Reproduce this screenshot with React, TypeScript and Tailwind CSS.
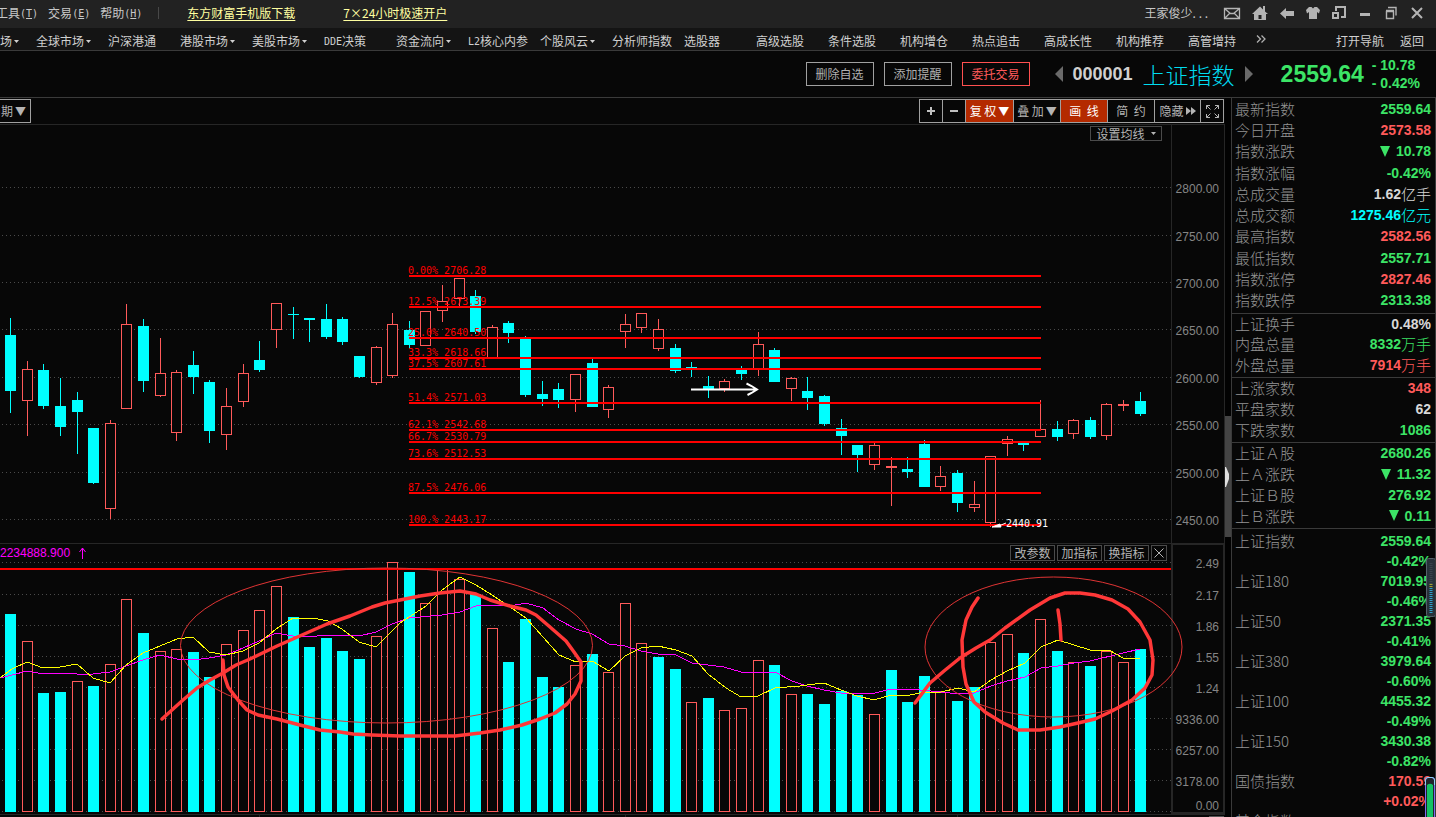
import React from 'react';

type Candle = { high: number; top: number; bottom: number; low: number; up: boolean; vol: number; volUp: boolean };

const RAW: [number, number, number, number, string, number, string][] = [
  [318, 335, 391, 413, 'c', 614, 'c'], [361, 369, 401, 436, 'r', 641, 'r'], [364, 370, 406, 409, 'c', 693, 'c'],
  [378, 406, 427, 436, 'c', 692, 'c'], [392, 400, 412, 454, 'c', 681, 'r'], [428, 428, 483, 484, 'c', 686, 'c'],
  [420, 423, 509, 519, 'r', 664, 'r'], [304, 324, 409, 409, 'r', 599, 'r'], [319, 326, 381, 392, 'c', 633, 'c'],
  [338, 373, 396, 397, 'r', 651, 'r'], [370, 372, 433, 441, 'r', 649, 'r'], [351, 365, 377, 394, 'c', 652, 'c'],
  [380, 382, 431, 443, 'c', 677, 'c'], [388, 406, 435, 450, 'r', 644, 'r'], [364, 373, 402, 407, 'r', 630, 'r'],
  [341, 360, 370, 372, 'c', 610, 'r'], [303, 303, 330, 348, 'r', 586, 'r'], [307, 314, 315, 339, 'c', 617, 'c'],
  [318, 318, 320, 342, 'c', 647, 'c'], [304, 319, 337, 339, 'c', 638, 'c'], [317, 319, 342, 345, 'c', 651, 'c'],
  [356, 356, 377, 378, 'c', 659, 'c'], [346, 347, 383, 385, 'r', 636, 'r'], [313, 324, 376, 378, 'r', 562, 'r'],
  [321, 330, 345, 349, 'c', 572, 'c'], [311, 311, 346, 346, 'r', 603, 'r'], [285, 301, 311, 322, 'r', 569, 'r'],
  [278, 278, 299, 306, 'r', 579, 'r'], [290, 296, 332, 334, 'c', 594, 'c'], [325, 327, 358, 358, 'r', 628, 'r'],
  [321, 323, 333, 343, 'c', 662, 'c'], [336, 339, 395, 397, 'c', 619, 'c'], [381, 394, 399, 406, 'c', 677, 'c'],
  [383, 389, 400, 408, 'c', 687, 'c'], [374, 374, 400, 412, 'r', 665, 'r'], [359, 363, 407, 407, 'c', 654, 'c'],
  [385, 387, 410, 418, 'r', 672, 'r'], [314, 324, 332, 348, 'r', 603, 'r'], [313, 313, 328, 333, 'r', 643, 'r'],
  [319, 329, 349, 351, 'r', 657, 'c'], [344, 348, 371, 373, 'c', 669, 'c'], [362, 367, 368, 377, 'c', 702, 'r'],
  [376, 386, 390, 398, 'c', 698, 'c'], [379, 381, 389, 392, 'r', 710, 'r'], [366, 370, 374, 380, 'c', 708, 'r'],
  [332, 344, 369, 376, 'r', 660, 'r'], [348, 350, 382, 382, 'c', 665, 'c'], [377, 378, 389, 401, 'r', 694, 'r'],
  [377, 391, 398, 410, 'c', 694, 'c'], [395, 396, 424, 426, 'c', 704, 'c'], [419, 428, 436, 455, 'c', 691, 'c'],
  [445, 445, 455, 472, 'c', 695, 'c'], [443, 445, 465, 470, 'r', 714, 'r'], [457, 466, 468, 506, 'r', 670, 'c'],
  [457, 469, 472, 478, 'c', 702, 'c'], [440, 444, 487, 487, 'c', 676, 'c'], [466, 476, 487, 491, 'r', 692, 'r'],
  [470, 473, 503, 512, 'c', 701, 'c'], [481, 504, 508, 512, 'r', 687, 'c'], [456, 456, 523, 527, 'r', 642, 'r'],
  [436, 439, 444, 456, 'r', 634, 'r'], [442, 443, 445, 451, 'c', 653, 'c'], [400, 429, 437, 437, 'r', 619, 'r'],
  [421, 429, 437, 441, 'c', 651, 'c'], [419, 420, 434, 439, 'r', 662, 'r'], [417, 420, 437, 439, 'c', 666, 'c'],
  [403, 404, 436, 440, 'r', 651, 'r'], [400, 404, 406, 411, 'r', 662, 'r'], [392, 401, 414, 416, 'c', 649, 'c'],
];

const CANDLES: Candle[] = RAW.map(([high, top, bottom, low, k, vol, v]) => ({
  high, top, bottom, low, up: k === 'r', vol, volUp: v === 'r',
}));

const FIB: [string, number][] = [
  ['0.00% 2706.28', 276], ['12.5% 2673.39', 307], ['25.0% 2640.50', 338], ['33.3% 2618.66', 358],
  ['37.5% 2607.61', 369], ['51.4% 2571.03', 403], ['62.1% 2542.68', 430], ['66.7% 2530.79', 442],
  ['73.6% 2512.53', 459], ['87.5% 2476.06', 493], ['100.% 2443.17', 525],
];

const PRICE_AXIS: [string, number][] = [
  ['2800.00', 188], ['2750.00', 236], ['2700.00', 283], ['2650.00', 330],
  ['2600.00', 378], ['2550.00', 425], ['2500.00', 473], ['2450.00', 520],
];
const VOLUME_AXIS: [string, number][] = [
  ['2.49', 563], ['2.17', 595], ['1.86', 626], ['1.55', 657], ['1.24', 688],
  ['9336.00', 719], ['6257.00', 750], ['3178.00', 781], ['0.00', 805],
];

const MA_SHORT = '0,678 12,669 27,662 43,668 60,667 77,664 93,678 110,683 126,665 143,653 160,646 177,639 193,637 209,652 226,655 243,651 259,643 276,629 293,618 313,618 328,621 342,629 359,642 376,647 392,631 400,623 426,606 442,590 460,577 476,585 492,595 510,607 526,618 543,637 559,655 576,662 592,661 609,671 625,656 641,648 658,646 676,650 692,656 708,674 726,688 741,697 758,696 775,688 800,686 807,685 824,683 841,690 857,696 874,700 891,695 910,695 924,692 941,692 958,688 974,692 991,680 1007,671 1025,663 1041,647 1058,640 1074,645 1090,650 1109,650 1123,658 1140,658';
const MA_LONG = '0,678 12,675 27,671 43,674 60,673 77,674 93,674 110,672 126,666 143,660 160,655 177,659 193,660 209,658 226,655 243,648 259,641 276,633 293,636 309,637 326,635 359,636 376,632 392,624 409,618 442,615 460,612 476,606 492,605 510,606 526,603 543,608 559,620 576,629 592,634 609,644 625,646 641,651 658,654 676,655 692,663 724,667 741,672 775,672 792,681 807,686 824,690 841,693 875,693 891,689 910,689 941,692 958,694 974,693 991,686 1007,681 1025,677 1041,668 1058,666 1074,663 1090,661 1123,653 1140,649';
const STROKE_LEFT = '162,719 183,700 197,688 210,680 223,673 236,665 250,659 277,646 302,635 327,624 350,616 372,607 385,603 400,600 420,596 440,593 460,591 476,594 490,600 510,606 526,610 536,615 550,627 566,641 574,652 581,662 581,681 575,694 567,704 555,713 540,719 522,725 500,730 480,733 455,736 400,736 372,735 353,734 340,732 320,730 300,725 277,719 258,715 247,710 238,700 228,687 224,675 223,660';
const STROKE_RIGHT = '915,703 930,683 944,671 960,658 976,648 990,640 1005,628 1030,610 1050,598 1065,593 1080,593 1095,595 1112,600 1128,609 1140,622 1150,640 1153,660 1152,675 1145,688 1132,700 1112,711 1095,719 1078,723 1060,727 1040,730 1018,730 1003,723 985,712 974,702 966,684 963,667 962,640 966,620 972,607 978,598';

const centerOf = (i: number) => Math.floor(10.6 + i * 16.612);

function Chart() {
  return (
    <svg viewBox="0 125 1225 692" preserveAspectRatio="xMinYMin meet" className="block h-auto w-full" role="img" aria-label="上证指数 K线图">
      <g stroke="#4a4a4a" strokeWidth="1" strokeDasharray="1 3" shapeRendering="crispEdges">
        {[187, 235, 282, 329, 377, 424, 472, 519, 562, 594, 625, 656, 687, 718, 749, 780, 811].map((y) => (
          <line key={y} x1="2" x2="1171" y1={y + 0.5} y2={y + 0.5} />
        ))}
      </g>
      <g fill="#262626">
        <rect x="0" y="543" width="1225" height="1" />
        <rect x="1171" y="125" width="1" height="418" />
        <rect x="1224" y="125" width="1" height="418" />
        <rect x="0" y="814" width="1225" height="1" />
        <rect x="259" y="814" width="1" height="3" />
        <rect x="625" y="814" width="1" height="3" />
        <rect x="957" y="814" width="1" height="3" />
        <rect x="1209" y="816" width="15" height="1" fill="#555" />
      </g>
      <rect x="1172" y="544" width="52" height="269" fill="none" stroke="#262626" strokeWidth="2" />
      <g fontFamily='"Liberation Sans", Arial, sans-serif' fontSize="12" fill="#858585" textAnchor="end">
        {[...PRICE_AXIS, ...VOLUME_AXIS].map(([t, y]) => (
          <text key={t} x="1219" y={y + 5}>{t}</text>
        ))}
      </g>
      <g shapeRendering="crispEdges">
        {CANDLES.map((c, i) => {
          const x = centerOf(i);
          const h = c.bottom - c.top;
          const color = c.up ? '#ff5a5a' : '#00ffff';
          return (
            <g key={i}>
              <rect x={x} y={c.high} width="1" height={Math.max(0, c.top - c.high)} fill={color} />
              <rect x={x} y={c.bottom} width="1" height={Math.max(0, c.low - c.bottom)} fill={color} />
              {c.up && h > 2
                ? <rect x={x - 4.5} y={c.top + 0.5} width="10" height={h - 1} fill="#070707" stroke={color} />
                : <rect x={x - 5} y={c.top} width="11" height={h} fill={color} />}
              {c.volUp
                ? <rect x={x - 4.5} y={c.vol + 0.5} width="10" height={811 - c.vol} fill="#070707" stroke="#ff5a5a" />
                : <rect x={x - 5} y={c.vol} width="11" height={812 - c.vol} fill="#00ffff" />}
            </g>
          );
        })}
      </g>
      <g shapeRendering="crispEdges" fill="none" strokeWidth="1">
        <polyline points={MA_LONG} stroke="#ff00ff" />
        <polyline points={MA_SHORT} stroke="#ffff00" />
      </g>
      <g fill="#ff0000">
        <rect x="0" y="568" width="1171" height="2" />
        {FIB.map(([t, y]) => (
          <g key={t}>
            <text x="408" y={y - 2} fontFamily='"DejaVu Sans Mono", monospace' fontSize="10">{t}</text>
            <rect x="409" y={y - 1} width="632" height="2" />
          </g>
        ))}
      </g>
      <path d="M691 389.500h66M746.500 383.500l5 2.500 5.500 3.500-5.500 3.500-4 2" fill="none" stroke="#fff" strokeWidth="2" />
      <path d="M1006 523l-5 2M992 527l8-3 1 3z" fill="#fff" stroke="#fff" strokeWidth="1" />
      <text x="1006" y="527" fontFamily='"DejaVu Sans Mono", monospace' fontSize="10" fill="#fff">2440.91</text>
      <text x="0" y="557" fontFamily='"Liberation Sans", Arial, sans-serif' fontSize="12" fill="#ff00ff">2234888.900</text>
      <path d="M82.500 559v-11M79.500 552l3-4 3 4" fill="none" stroke="#ff00ff" />
      <g fill="none" stroke="#e03434" strokeWidth="1">
        <ellipse cx="386.500" cy="645.500" rx="206" ry="77.500" />
        <ellipse cx="1053.500" cy="647" rx="128.500" ry="70" />
      </g>
      <g fill="none" stroke="#ff3838" strokeWidth="3.500" strokeLinecap="round" strokeLinejoin="round">
        <polyline points={STROKE_LEFT} />
        <polyline points={STROKE_RIGHT} />
        <polyline points="1058,610 1060,624 1061,640" />
      </g>
    </svg>
  );
}

const Caret = () => (
  <svg viewBox="0 0 5 3" className="ml-0.5 inline-block h-[3px] w-[5px]" fill="currentColor"><path d="M0 0h5L2.500 3z" /></svg>
);

const MENU: [string, boolean][] = [
  ['全球市场', true], ['沪深港通', false], ['港股市场', true], ['美股市场', true], ['DDE决策', false], ['资金流向', true],
  ['L2核心内参', false], ['个股风云', true], ['分析师指数', false], ['选股器', false], ['高级选股', false], ['条件选股', false],
  ['机构增仓', false], ['热点追击', false], ['高成长性', false], ['机构推荐', false], ['高管增持', false],
];

function mixedText(label: string) {
  const m = label.match(/^([A-Z0-9]+)(.*)$/);
  if (!m) return label;
  return <><span className="font-['DejaVu_Sans_Mono'] text-[10px]">{m[1]}</span>{m[2]}</>;
}

function TitleMenu({ label, hotkey }: { label: string; hotkey: string }) {
  return (
    <button className="flex items-center whitespace-nowrap">
      {label}
      <span className="font-['DejaVu_Sans_Mono'] text-[10px]">(<u>{hotkey}</u>)</span>
    </button>
  );
}

function TitleIcon({ label, children, wide = false }: { label: string; children: React.ReactNode; wide?: boolean }) {
  return (
    <button aria-label={label} className={wide ? 'flex w-7 justify-center' : 'flex w-[26px] justify-center'}>
      <svg viewBox="0 0 18 16" className="h-4 w-[18px]" fill="#b4b4b4" stroke="none">{children}</svg>
    </button>
  );
}

function TitleBar() {
  return (
    <header className="flex h-7 shrink-0 items-center overflow-hidden bg-[#222222] pb-0.5 text-[12px] text-[#c8c8c8]">
      <nav className="-ml-1 flex items-center gap-2.5">
        <TitleMenu label="工具" hotkey="T" />
        <TitleMenu label="交易" hotkey="E" />
        <TitleMenu label="帮助" hotkey="H" />
      </nav>
      <span className="ml-4 h-3 w-px bg-[#484848]" />
      <a href="#mobile" className="ml-7 text-[#ffffa0] underline underline-offset-2">东方财富手机版下载</a>
      <a href="#account" className="ml-12 text-[#ffffa0] underline underline-offset-2">7×24小时极速开户</a>
      <div className="ml-auto flex items-center pr-1.5">
        <span className="mr-2.5">王家俊少. . .</span>
        <TitleIcon label="消息" wide>
          <path d="M1.500 3.500h15v10h-15zM2 4l5.500 4.500h3L16 4M2 13l4.500-4.500M16 13l-4.500-4.500" fill="none" stroke="#b4b4b4" strokeWidth="1.300" />
        </TitleIcon>
        <TitleIcon label="首页" wide>
          <path d="M9 1.500L12 4.500V1h2v5.500L17 9h-2v6H3V9H1zM7.500 10v4h3v-4z" fillRule="evenodd" />
        </TitleIcon>
        <TitleIcon label="后退"><path d="M2 8.500L8 3v3h8v5H8v3z" /></TitleIcon>
        <TitleIcon label="换肤"><path d="M5 2h2.500l1.500 1.500L10.500 2H13l3 3-1 3.500-2-1.500v7H5V7L3 8.500 2 5z" /></TitleIcon>
        <TitleIcon label="窗口布局">
          <path d="M5 1h11v12h-5v-2h3V3H7v3H5zM2 7h7v7H2zM4 9v3h3V9z" fillRule="evenodd" />
        </TitleIcon>
        <TitleIcon label="最小化"><path d="M4 8h10v3H4z" /></TitleIcon>
        <TitleIcon label="还原">
          <path d="M4.500 6.500h7v7h-7zM4 5.500h8M6 2.500h8v8" fill="none" stroke="#b4b4b4" strokeWidth="1.400" />
        </TitleIcon>
        <TitleIcon label="关闭"><path d="M4 3l10 10M14 3L4 13" fill="none" stroke="#b4b4b4" strokeWidth="2" /></TitleIcon>
      </div>
    </header>
  );
}

function MenuBar() {
  return (
    <nav className="flex h-[23px] shrink-0 items-center overflow-hidden border-b border-[#3a3a3a] bg-[#141414] pt-1 text-[12px] whitespace-nowrap text-[#d0d0d0]">
      <button className="flex w-9 shrink-0 items-center">场<Caret /></button>
      {MENU.map(([label, menu]) => (
        <button key={label} className="flex w-18 shrink-0 items-center">{mixedText(label)}{menu && <Caret />}</button>
      ))}
      <button aria-label="更多" className="-ml-1 pb-1">
        <svg viewBox="0 0 10 8" className="h-2 w-2.5" fill="none" stroke="#b0b0b0" strokeWidth="1.300"><path d="M1 .5L4.500 4 1 7.500M5.500.5L9 4 5.500 7.500" /></svg>
      </button>
      <div className="ml-auto flex gap-4 pr-3">
        <button>打开导航</button>
        <button>返回</button>
      </div>
    </nav>
  );
}

function StockHeader() {
  return (
    <section className="flex h-[47px] shrink-0 items-center justify-end border-b border-[#3a3a3a] pr-4 whitespace-nowrap">
      <div className="flex gap-2.5 text-[12px] text-[#b0b0b0]">
        <button className="h-6 w-[68px] border border-[#a0a0a0]">删除自选</button>
        <button className="h-6 w-[68px] border border-[#a0a0a0]">添加提醒</button>
        <button className="h-6 w-[68px] border border-[#ff5050] text-[#ff5a5a]">委托交易</button>
      </div>
      <button aria-label="上一个" className="ml-[25px]">
        <svg viewBox="0 0 8 16" className="h-4 w-2" fill="#6a6a6a"><path d="M8 0v16L0 8z" /></svg>
      </button>
      <span className="ml-2.5 font-['Liberation_Sans'] text-[18px] font-bold text-[#d0d0d0]">000001</span>
      <h1 className="ml-2.5 text-[23px] leading-6 font-light text-[#00dcf0]">上证指数</h1>
      <button aria-label="下一个" className="ml-2.5">
        <svg viewBox="0 0 8 16" className="h-4 w-2" fill="#6a6a6a"><path d="M0 0v16l8-8z" /></svg>
      </button>
      <strong className="ml-7 font-['Liberation_Sans'] text-[23px] text-[#3ce466]">2559.64</strong>
      <div className="ml-2 flex flex-col font-['Liberation_Sans'] text-[14px] leading-[18px] font-bold text-[#3ce466]">
        <span>- 10.78</span>
        <span>- 0.42%</span>
      </div>
    </section>
  );
}

function Toolbar() {
  const cell = 'flex h-full items-center justify-center border-r border-[#a0a0a0]';
  return (
    <div className="flex h-[27px] shrink-0 items-start justify-between border-b border-[#262626] pt-px pr-px text-[12px] whitespace-nowrap text-[#b4b4b4]">
      <button className="-ml-3 flex h-6 items-center gap-0.5 border border-[#a0a0a0] pr-1">周期<span className="text-[11px]">▼</span></button>
      <div className="flex h-6 border border-r-0 border-[#a0a0a0]">
        <button aria-label="放大" className={`${cell} w-[23px]`}>
          <svg viewBox="0 0 8 8" className="size-2" fill="#c0c0c0"><path d="M3 0h2v3h3v2H5v3H3V5H0V3h3z" /></svg>
        </button>
        <button aria-label="缩小" className={`${cell} w-[23px]`}>
          <svg viewBox="0 0 8 8" className="size-2" fill="#c0c0c0"><path d="M0 3h8v2H0z" /></svg>
        </button>
        <button className={`${cell} w-12 gap-0.5 bg-[#b42a00] text-white`}>复 权<span className="text-[11px]">▼</span></button>
        <button className={`${cell} w-[47px] gap-0.5`}>叠 加<span className="text-[11px]">▼</span></button>
        <button className={`${cell} w-[47px] bg-[#b42a00] text-white`}>画&nbsp; 线</button>
        <button className={`${cell} w-[47px]`}>简&nbsp; 约</button>
        <button className={`${cell} w-[46px] gap-0.5`}>
          隐藏
          <svg viewBox="0 0 10 8" className="h-2 w-2.5" fill="currentColor"><path d="M0 0l5 4-5 4zM5 0l5 4-5 4z" /></svg>
        </button>
        <button aria-label="全屏" className={`${cell} w-[23px]`}>
          <svg viewBox="0 0 13 13" className="size-[13px]" fill="none" stroke="#b4b4b4"><path d="M.5 4V.5H4M.5.5l4 4M9 .5h3.500V4M12.500.5l-4 4M.5 9v3.500H4M.5 12.500l4-4M9 12.500h3.500V9M12.500 12.500l-4-4" /></svg>
        </button>
      </div>
    </div>
  );
}

type Row = { label: string; value: string; unit?: string; tone: 'g' | 'r' | 'w' | 'c'; down?: boolean };
const TONE = { g: 'text-[#3ce466]', r: 'text-[#ff5a5a]', w: 'text-[#d8d8d8]', c: 'text-[#00ffff]' };

const SECTIONS: { height: string; rows: Row[] }[] = [
  { height: 'h-[216px]', rows: [
    { label: '最新指数', value: '2559.64', tone: 'g' }, { label: '今日开盘', value: '2573.58', tone: 'r' },
    { label: '指数涨跌', value: '10.78', tone: 'g', down: true }, { label: '指数涨幅', value: '-0.42%', tone: 'g' },
    { label: '总成交量', value: '1.62', unit: '亿手', tone: 'w' }, { label: '总成交额', value: '1275.46', unit: '亿元', tone: 'c' },
    { label: '最高指数', value: '2582.56', tone: 'r' }, { label: '最低指数', value: '2557.71', tone: 'g' },
    { label: '指数涨停', value: '2827.46', tone: 'r' }, { label: '指数跌停', value: '2313.38', tone: 'g' },
  ] },
  { height: 'h-16', rows: [
    { label: '上证换手', value: '0.48%', tone: 'w' }, { label: '内盘总量', value: '8332', unit: '万手', tone: 'g' },
    { label: '外盘总量', value: '7914', unit: '万手', tone: 'r' },
  ] },
  { height: 'h-[65px]', rows: [
    { label: '上涨家数', value: '348', tone: 'r' }, { label: '平盘家数', value: '62', tone: 'w' }, { label: '下跌家数', value: '1086', tone: 'g' },
  ] },
  { height: 'h-[86px]', rows: [
    { label: '上证Ａ股', value: '2680.26', tone: 'g' }, { label: '上Ａ涨跌', value: '11.32', tone: 'g', down: true },
    { label: '上证Ｂ股', value: '276.92', tone: 'g' }, { label: '上Ｂ涨跌', value: '0.11', tone: 'g', down: true },
  ] },
];

const INDICES: [string, string, string, 'g' | 'r'][] = [
  ['上证指数', '2559.64', '-0.42%', 'g'], ['上证180', '7019.95', '-0.46%', 'g'], ['上证50', '2371.35', '-0.41%', 'g'],
  ['上证380', '3979.64', '-0.60%', 'g'], ['上证100', '4455.32', '-0.49%', 'g'], ['上证150', '3430.38', '-0.82%', 'g'],
  ['国债指数', '170.59', '+0.02%', 'r'], ['基金指数', '', '', 'g'],
];

function QuotePanel() {
  return (
    <aside className="relative flex w-[205px] shrink-0 flex-col overflow-hidden border-x border-[#3a3a3a] text-[15px] leading-5 whitespace-nowrap">
      {SECTIONS.map((s) => (
        <dl key={s.rows[0].label} className={`${s.height} flex shrink-0 flex-col border-b border-[#3a3a3a] pr-1 pb-0.5 pl-[3px]`}>
          {s.rows.map((r) => (
            <div key={r.label} className="flex h-5 flex-1 items-center justify-between">
              <dt className="font-light text-[#949494]">{r.label}</dt>
              <dd className={`${TONE[r.tone]} flex items-center font-['Liberation_Sans'] text-[14px] font-bold`}>
                {r.down && <svg viewBox="0 0 10 11" className="mr-1.5 h-[11px] w-2.5" fill="currentColor"><path d="M0 0h10L5 11z" /></svg>}
                {r.value}
                {r.unit && <span className="font-['Noto_Sans_CJK_SC'] text-[15px] font-light">{r.unit}</span>}
              </dd>
            </div>
          ))}
        </dl>
      ))}
      <dl className="flex flex-col pt-0.5 pr-1 pl-[3px]">
        {INDICES.map(([name, value, change, tone]) => (
          <div key={name} className="flex h-10 justify-between">
            <dt className="font-light text-[#949494]">{name}</dt>
            <dd className={`${TONE[tone]} flex flex-col text-right font-['Liberation_Sans'] text-[14px] font-bold`}>
              <span>{value}</span>
              <span>{change}</span>
            </dd>
          </div>
        ))}
      </dl>
      <svg viewBox="0 0 9 59" className="absolute top-[460px] right-0 h-[59px] w-[9px]">
        <rect x=".5" y=".5" width="9" height="58" rx="2" fill="#28323a" stroke="#55606a" />
        <path d="M5 5v21" stroke="#39434c" strokeWidth="3" strokeDasharray="1 1" />
        <path d="M5 26v4" stroke="#a0a030" strokeWidth="3" strokeDasharray="1 1" />
        <path d="M5 30v25" stroke="#2f9fc8" strokeWidth="3" strokeDasharray="1 1" />
      </svg>
      <svg viewBox="0 0 10 40" className="absolute top-[679px] right-0 h-10 w-2.5">
        <path d="M.5 42V3q0-2.500 2.500-2.500h4q2.500 0 2.500 2.500v39" fill="#20242c" stroke="#7d6cf0" />
        <path d="M.5 8V3q0-2.500 2.500-2.500h4q2.500 0 2.500 2.500v5" fill="none" stroke="#8fd0f5" />
        <path d="M2 8q3-2.500 6 0v32H2z" fill="#14c264" />
      </svg>
    </aside>
  );
}

export default function App() {
  return (
    <div className="flex h-screen flex-col overflow-hidden bg-[#070707] font-['Noto_Sans_CJK_SC',sans-serif]">
      <TitleBar />
      <MenuBar />
      <StockHeader />
      <main className="flex min-h-0 flex-1">
        <div className="flex min-w-0 flex-1 flex-col">
          <Toolbar />
          <div className="relative min-h-0 flex-1 overflow-hidden">
            <Chart />
            <button className="absolute top-px right-[63px] flex h-[15px] w-[72px] items-center justify-center gap-1 border border-[#4a4a4a] bg-[#070707] text-[12px] leading-3 text-[#b4b4b4]">
              设置均线<Caret />
            </button>
            <div className="absolute top-[420px] right-[58px] flex gap-0.5 text-[12px] leading-3 text-[#b4b4b4]">
              <button className="h-4 w-[45px] border border-[#4a4a4a] bg-[#070707]">改参数</button>
              <button className="h-4 w-[45px] border border-[#4a4a4a] bg-[#070707]">加指标</button>
              <button className="h-4 w-[45px] border border-[#4a4a4a] bg-[#070707]">换指标</button>
              <button aria-label="关闭指标" className="flex size-4 items-center justify-center border border-[#4a4a4a] bg-[#070707]">
                <svg viewBox="0 0 10 10" className="size-2.5" stroke="#b4b4b4"><path d="M.5.5l9 9M9.500.5l-9 9" /></svg>
              </button>
            </div>
          </div>
        </div>
        <div className="flex w-1.5 shrink-0 flex-col bg-[#020202] pt-[318px]">
          <button aria-label="收起侧栏" className="flex h-[121px] w-full items-center bg-[#444444]">
            <svg viewBox="0 0 4 20" className="h-5 w-1" fill="#e0e0e0"><path d="M0 0h1l3 7v5l-3 8H0z" /></svg>
          </button>
        </div>
        <QuotePanel />
      </main>
    </div>
  );
}
